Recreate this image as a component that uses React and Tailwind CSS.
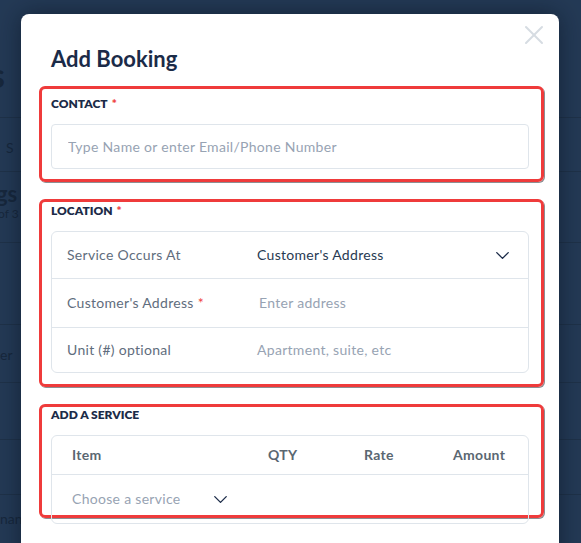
import { X, ChevronDown } from 'lucide-react';

const font = { fontFamily: 'Lato, "Open Sans", sans-serif' };

const RedBox = ({ className = '', children }) => (
  <div className={`-ml-[12px] -mr-[15px] rounded-md border-[3px] border-[#ef3b3b] pl-[9px] pr-[12px] shadow-[1px_1px_0_#8d8f93] ${className}`}>
    {children}
  </div>
);

const SectionLabel = ({ text, required }) => (
  <div className="h-4 text-[12px] font-extrabold uppercase leading-4 text-[#1b2b48]">
    {text}
    {required && <span className="ml-1 text-[#ef4444]">*</span>}
  </div>
);

const LocationRow = ({ label, required, children, className = '' }) => (
  <div className={`flex items-center pl-[15px] pr-4 text-sm tracking-[0.3px] ${className}`}>
    <div className="w-[190px] text-[#5f6d7d]">
      {label}
      {required && <span className="ml-1 text-[#ef4444]">*</span>}
    </div>
    <div className="flex flex-1 items-center">{children}</div>
  </div>
);

export default function App() {
  return (
    <div className="relative h-[543px] w-[581px] overflow-hidden bg-[#243a56]" style={font}>
      {/* dimmed page behind the modal */}
      <div className="flex flex-col text-[#17283d]">
        <div className="h-[118px] border-b border-[#1f3249] pl-0 pt-[58px] text-[34px] font-bold leading-none">
          <span className="-ml-[10px]">s</span>
        </div>
        <div className="h-[54px] border-b border-[#1f3249] pt-[20px] pl-[6px] text-sm">S</div>
        <div className="h-[71px] border-b border-[#1f3249] pt-[10px] text-[22px] font-bold leading-6">
          <span className="-ml-[4px]">gs</span>
          <div className="-ml-[2px] text-xs font-normal">of 3</div>
        </div>
        <div className="h-[82px] border-b border-[#1f3249]" />
        <div className="h-[58px] border-b border-[#1f3249] pt-[20px] text-sm">er</div>
        <div className="h-[57px] border-b border-[#1f3249]" />
        <div className="h-[55px] border-b border-[#1f3249]" />
        <div className="h-[48px] pt-[14px] text-sm">nan</div>
      </div>

      <div className="absolute left-[21px] top-[14px] h-[560px] w-[538px] rounded-lg bg-white px-[30px] pt-[31px] shadow-[0_0_24px_rgba(8,16,30,0.55)]">
        <button className="absolute left-[497px] top-[5px] text-[#d6dce2]">
          <X size={32} strokeWidth={1.5} />
        </button>

        <h1 className="h-7 text-[22px] font-bold leading-7 text-[#1b2b48]">Add Booking</h1>

        <RedBox className="mt-[13px] pb-[10px] pt-[7px]">
          <SectionLabel text="Contact" required />
          <input
            className="mt-3 block h-[45px] w-full rounded border border-[#dfe5eb] px-4 text-sm tracking-[0.3px] text-[#283a52] outline-none placeholder:text-[#97a3b3]"
            placeholder="Type Name or enter Email/Phone Number"
            style={font}
          />
        </RedBox>

        <RedBox className="mt-[17px] pb-[11px] pt-[1px]">
          <SectionLabel text="Location" required />
          <div className="mt-3 rounded-md border border-[#dfe5eb]">
            <LocationRow label="Service Occurs At" className="h-[47px] border-b border-[#dfe5eb]">
              <span className="flex-1 text-[#283a52]">Customer's Address</span>
              <ChevronDown size={23} strokeWidth={1.4} className="-mr-[2px] text-[#1b2b48]" />
            </LocationRow>
            <LocationRow label="Customer's Address" required className="h-[49px] border-b border-[#dfe5eb]">
              <span className="pl-[2px] text-[#97a3b3]">Enter address</span>
            </LocationRow>
            <LocationRow label="Unit (#) optional" className="h-[44px]">
              <span className="text-[#97a3b3]">Apartment, suite, etc</span>
            </LocationRow>
          </div>
        </RedBox>

        <RedBox className="mt-[17px] h-[114px]">
          <SectionLabel text="Add a Service" />
          <div className="mt-3 rounded-md border border-[#dfe5eb]">
            <div className="flex h-[39px] items-center border-b border-[#dfe5eb] px-[20px] text-sm font-bold tracking-[0.3px] text-[#5a6772]">
              <div className="w-[196px]">Item</div>
              <div className="w-[96px]">QTY</div>
              <div className="w-[89px]">Rate</div>
              <div className="flex-1">Amount</div>
            </div>
            <div className="flex h-[48px] items-center px-[20px] text-sm tracking-[0.3px]">
              <span className="w-[137px] text-[#97a3b3]">Choose a service</span>
              <ChevronDown size={23} strokeWidth={1.4} className="text-[#1b2b48]" />
            </div>
          </div>
        </RedBox>
      </div>
    </div>
  );
}
